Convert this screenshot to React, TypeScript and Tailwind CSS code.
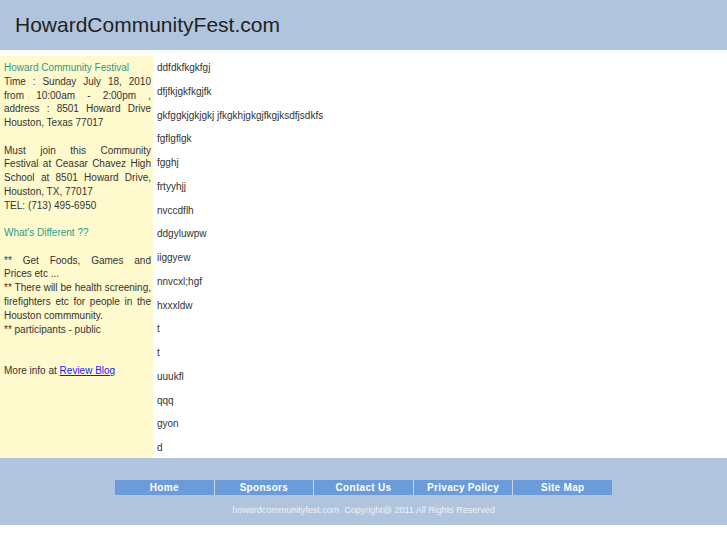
import React from "react";

const items = [
  "ddfdkfkgkfgj",
  "dfjfkjgkfkgjfk",
  "gkfggkjgkjgkj jfkgkhjgkgjfkgjksdfjsdkfs",
  "fgflgflgk",
  "fgghj",
  "frtyyhjj",
  "nvccdflh",
  "ddgyluwpw",
  "iiggyew",
  "nnvcxl;hgf",
  "hxxxldw",
  "t",
  "t",
  "uuukfl",
  "qqq",
  "gyon",
  "d",
];

const navLinks = ["Home", "Sponsors", "Contact Us", "Privacy Policy", "Site Map"];

export default function App() {
  return (
    <div className="w-[727px] bg-white font-['Liberation_Sans',Arial,sans-serif] text-[#333]">
      {/* header */}
      <div className="h-[50px] bg-[#b0c4de] flex items-center pl-[15px]">
        <h1 className="text-[21px] text-[#222] leading-none pb-[2px]">HowardCommunityFest.com</h1>
      </div>

      {/* body */}
      <div className="flex mt-[6px]">
        <div className="w-[153px] shrink-0 bg-[#fffacd] pl-[4px] pr-[2px] pt-[5px] text-[10px] leading-[13.77px] text-justify">
          <div className="text-[#2a9a8a]">Howard Community Festival</div>
          <div>
            Time : Sunday July 18, 2010 from 10:00am - 2:00pm , address : 8501 Howard Drive Houston, Texas 77017
          </div>
          <br />
          <div>
            Must join this Community Festival at Ceasar Chavez High School at 8501 Howard Drive, Houston, TX, 77017
          </div>
          <div>TEL: (713) 495-6950</div>
          <br />
          <div className="text-[#2a9a8a]">What's Different ??</div>
          <br />
          {/* the original wraps this line before "Prices" */}
          <div className="[text-align-last:justify]">** Get Foods, Games and</div>
          <div>Prices etc ...</div>
          <div>** There will be health screening, firefighters etc for people in the Houston commmunity.</div>
          <div>** participants - public</div>
          <br />
          <br />
          <div>
            More info at{" "}
            <a href="#" className="text-[#1a1aee] underline">
              Review Blog
            </a>
          </div>
        </div>

        <div className="flex-1 pl-[4px] pt-[5px] pb-[3px] flex flex-col gap-[10px] text-[10px] leading-[13.75px]">
          {items.map((t, i) => (
            <p key={i}>{t}</p>
          ))}
        </div>
      </div>

      {/* footer */}
      <div className="bg-[#b0c4de] pt-[22px] h-[67px]">
        <div className="mx-auto w-[497px] flex h-[15px] bg-[#6b9bd9]">
          {navLinks.map((l, i) => (
            <a
              key={l}
              href="#"
              className={`flex-1 flex items-center justify-center text-white font-bold text-[10px] tracking-[0.3px] ${
                i > 0 ? "border-l border-[#c8d6ea]" : ""
              }`}
            >
              {l}
            </a>
          ))}
        </div>
        <div className="text-center text-[9px] text-[#eef2f8] mt-[9px] whitespace-pre">
          {"howardcommunityfest.com  Copyright@ 2011 All Rights Reserved"}
        </div>
      </div>
    </div>
  );
}
